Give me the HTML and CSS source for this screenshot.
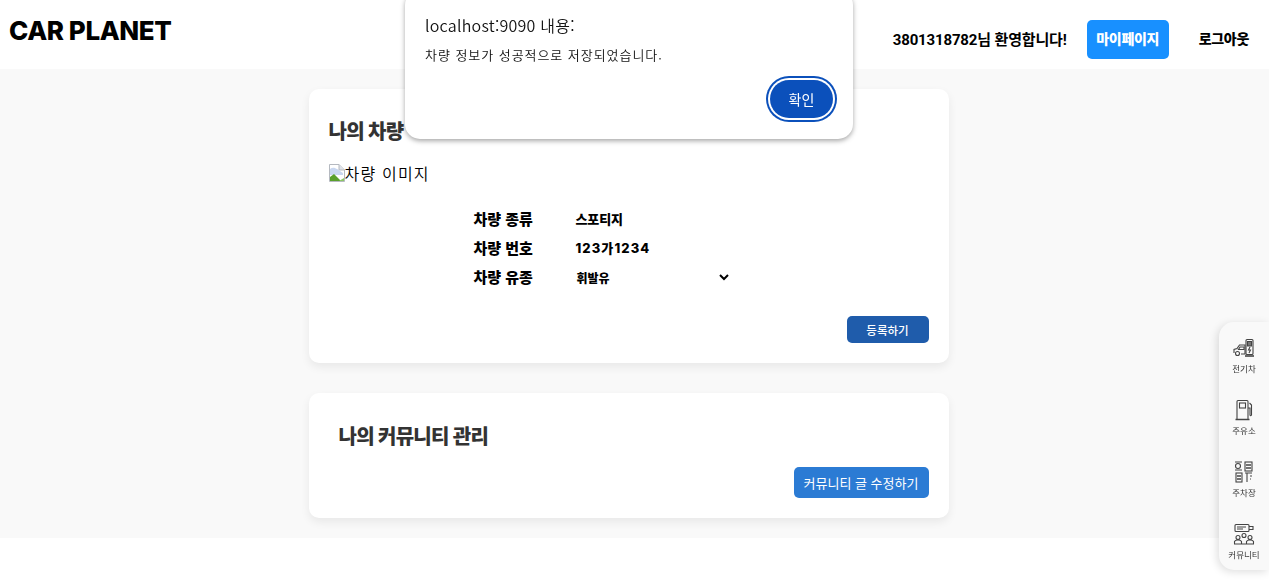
FILE: index.html
```html
<!DOCTYPE html>
<html lang="ko">
<head>
<meta charset="utf-8">
<title>CAR PLANET</title>
<link rel="stylesheet" href="styles.css">
</head>
<body>
<header class="header">
  <div class="logo">CAR PLANET</div>
  <nav class="nav">
    <span class="welcome">3801318782님 환영합니다!</span>
    <a class="nav-btn nav-primary">마이페이지</a>
    <a class="nav-btn nav-plain">로그아웃</a>
  </nav>
</header>
<main class="main">
  <section class="card car-card">
    <h2 class="card-title">나의 차량</h2>
    <div class="car-image">
      <svg class="broken" width="16" height="18" viewBox="0 0 16 18">
        <path d="M0.5 0.5H10L15.5 6V17.5H0.500Z" fill="#fff" stroke="#b5b9c0"/>
        <path d="M10 0.5V6H15.500" fill="#dfe3ea" stroke="#b5b9c0"/>
        <path d="M1 5C5 2 8 5 14 9V11H1Z" fill="#c9d7f0"/>
        <path d="M1 17V13L5 10L12 17Z" fill="#5aa02c"/>
        <path d="M10 17L15 17V14Z" fill="#8cc665"/>
      </svg><span>차량 이미지</span>
    </div>
    <div class="info">
      <div class="info-label">차량 종류</div><div class="info-value">스포티지</div>
      <div class="info-label">차량 번호</div><div class="info-value info-number">123가1234</div>
      <div class="info-label">차량 유종</div>
      <div class="info-select"><span>휘발유</span>
        <svg class="chevron" width="10" height="7" viewBox="0 0 10 7"><path d="M1 1L5 5L9 1" fill="none" stroke="#000" stroke-width="2"/></svg>
      </div>
    </div>
    <div class="actions"><button class="btn-save">등록하기</button></div>
  </section>
  <section class="card community-card">
    <h2 class="card-title community-title">나의 커뮤니티 관리</h2>
    <div class="actions"><button class="btn-edit">커뮤니티 글 수정하기</button></div>
  </section>
</main>
<aside class="side">
  <div class="side-item">
    <svg width="22" height="22" viewBox="0 0 22 22" fill="none" stroke="#444" stroke-width="1.100">
      <path d="M1 16V12.500L4 11.500L6.500 8H12V17H8"/><path d="M7 10H11V12.500H5.500Z"/><circle cx="4.500" cy="16.500" r="2"/>
      <rect x="13" y="2.500" width="7" height="15" rx="1"/><path d="M14.500 4.500H18.500V9H14.500Z" fill="#777"/><path d="M17 10L15.500 13H17.500L16 16"/><path d="M12 19H21" stroke-width="1.600"/>
    </svg>
    <span>전기차</span>
  </div>
  <div class="side-item">
    <svg width="20" height="22" viewBox="0 0 20 22" fill="none" stroke="#444" stroke-width="1.100">
      <path d="M3 20V2.500Q3 1.500 4 1.500H13Q14 1.500 14 2.500V20"/><rect x="5.500" y="4" width="6" height="5"/><path d="M1.500 20.500H15.500" stroke-width="1.500"/>
      <path d="M14 9H16V16Q16.500 17.500 17.500 16V6L15.500 4"/>
    </svg>
    <span>주유소</span>
  </div>
  <div class="side-item">
    <svg width="20" height="22" viewBox="0 0 20 22" fill="none" stroke="#444" stroke-width="1.100">
      <circle cx="4" cy="5" r="2.500"/><path d="M1 1H8M1 9H8"/><rect x="11" y="1" width="7" height="9"/><path d="M12 4H17M12 7H17" stroke-width="1.500"/>
      <rect x="2" y="12" width="6" height="9"/><path d="M3 15H7M3 18H7" stroke-width="1.300"/><path d="M11 12H18M13 12V21M16 15H18M16 18H17"/>
    </svg>
    <span>주차장</span>
  </div>
  <div class="side-item">
    <svg width="22" height="22" viewBox="0 0 22 22" fill="none" stroke="#444" stroke-width="1.100">
      <rect x="2" y="1.500" width="14" height="7" rx="1"/><path d="M4 4H13M4 6H10"/><path d="M16 3.500H20V6.500H16"/>
      <circle cx="11" cy="12.500" r="2"/><circle cx="5" cy="14.500" r="2"/><circle cx="17" cy="14.500" r="2"/>
      <path d="M1.500 20.500V18.500Q2 17 5 17Q8 17 8.500 18.500V20.500M13.500 20.500V18.500Q14 17 17 17Q20 17 20.500 18.500V20.500M1 21H21"/>
    </svg>
    <span>커뮤니티</span>
  </div>
</aside>
<div class="dialog" role="alertdialog">
  <div class="dialog-title">localhost:9090 내용:</div>
  <div class="dialog-msg">차량 정보가 성공적으로 저장되었습니다.</div>
  <div class="dialog-actions"><button class="dialog-ok">확인</button></div>
</div>
</body>
</html>
```
FILE: styles.css
```css
* { box-sizing: border-box; }
html, body { margin: 0; padding: 0; }
body {
  height: 580px;
  overflow: hidden;
  background: #fff;
  color: #000;
  font-family: "Roboto", "Noto Sans CJK KR", sans-serif;
}
.header {
  height: 69px;
  display: flex;
  align-items: center;
  justify-content: space-between;
  padding: 0 20px 7px 9px;
  background: #fff;
}
.logo {
  font-family: "Inter", "Noto Sans CJK KR", sans-serif;
  font-size: 26px;
  font-weight: 800;
  letter-spacing: -0.4px;
  margin-top: -2px;
}
.nav { display: flex; align-items: center; padding-top: 17px; }
.welcome { font-size: 15px; font-weight: 700; letter-spacing: -0.15px; margin-right: 20px; padding-bottom: 2px; }
.nav-btn {
  height: 39px;
  display: flex;
  align-items: center;
  justify-content: center;
  padding-bottom: 3px;
  font-size: 14px;
  font-weight: 900;
  border-radius: 5px;
  letter-spacing: -0.3px;
}
.nav-primary { width: 82px; background: #1890ff; color: #fff; margin-right: 30px; }
.nav-plain { color: #000; }
.main {
  height: 469px;
  background: #f9f9f9;
  padding: 20px 12px 0 0;
  display: flex;
  flex-direction: column;
  align-items: center;
  gap: 30px;
}
.card {
  width: 640px;
  background: #fff;
  border-radius: 10px;
  box-shadow: 0 4px 10px rgba(0, 0, 0, 0.07);
}
.car-card { height: 274px; padding: 30px 20px 20px; }
.community-card { height: 125px; padding: 31px 20px 20px; }
.card-title {
  margin: 0;
  height: 27px;
  font-size: 20px;
  line-height: 27px;
  font-weight: 900;
  color: #333;
  letter-spacing: -0.75px;
}
.community-title { padding-left: 10px; }
.car-image {
  display: flex;
  align-items: center;
  margin-top: 16px;
  height: 22px;
  font-size: 16px;
  font-weight: 350;
  font-family: "Noto Sans CJK KR", sans-serif;
  letter-spacing: 1.2px;
}
.info {
  display: grid;
  grid-template-columns: 102px 160px;
  grid-auto-rows: 29px;
  align-items: center;
  margin: 20px 0 0 145px;
}
.info-label { font-size: 15px; font-weight: 900; font-family: "Noto Sans CJK KR", sans-serif; }
.info-value { font-size: 13px; font-weight: 800; font-family: "Inter", "Noto Sans CJK KR", sans-serif; letter-spacing: -0.1px; }
.info-number { letter-spacing: 1.1px; }
.info-select {
  display: flex;
  justify-content: space-between;
  align-items: center;
  padding: 1px 3px 0 1px;
  width: 156px;
  font-size: 12px;
  font-weight: 900;
  font-family: "Noto Sans CJK KR", sans-serif;
}
.chevron { margin-top: 1px; }
.actions { display: flex; justify-content: flex-end; }
.car-card .actions { margin-top: 25px; }
.community-card .actions { margin-top: 16px; }
button { border: 0; font-family: "Noto Sans CJK KR", sans-serif; color: #fff; }
.btn-save {
  width: 82px;
  height: 27px;
  background: #1f5cab;
  border-radius: 5px;
  font-size: 11.5px;
  font-weight: 500;
  padding: 0;
}
.btn-edit {
  width: 135px;
  height: 31px;
  background: #2b7bd4;
  border-radius: 5px;
  font-size: 13px;
  padding: 0;
}
.side {
  position: fixed;
  right: 0;
  top: 322px;
  width: 50px;
  height: 248px;
  background: #f9f9f9;
  border-radius: 15px 0 0 15px;
  box-shadow: -2px 2px 8px rgba(0, 0, 0, 0.13);
  display: flex;
  flex-direction: column;
  padding-top: 15px;
  gap: 24px;
}
.side-item {
  height: 38px;
  display: flex;
  flex-direction: column;
  align-items: center;
  justify-content: space-between;
  font-size: 8.5px;
  color: #333;
  font-family: "Noto Sans CJK KR", sans-serif;
}
.side-item span { line-height: 13px; }
.dialog {
  position: fixed;
  left: 405px;
  top: -10px;
  width: 448px;
  height: 149px;
  background: #fff;
  border-radius: 15px;
  box-shadow: 0 2px 5px rgba(0, 0, 0, 0.35);
  padding: 24px 18px 0 20px;
  color: #111;
  font-family: "Noto Sans CJK KR", sans-serif;
}
.dialog-title { font-size: 16px; line-height: 22px; font-weight: 350; letter-spacing: 0.25px; }
.dialog-msg { margin-top: 9px; font-size: 13px; line-height: 20px; letter-spacing: 0.95px; font-weight: 350; }
.dialog-actions { display: flex; justify-content: flex-end; margin-top: 15px; }
.dialog-ok {
  width: 63px;
  height: 38px;
  border-radius: 19px;
  background: #0b50bb;
  font-size: 14px;
  box-shadow: 0 0 0 2px #fff, 0 0 0 4px #0b50bb;
  margin: 0 2px 0 0;
  padding: 0;
}
```
